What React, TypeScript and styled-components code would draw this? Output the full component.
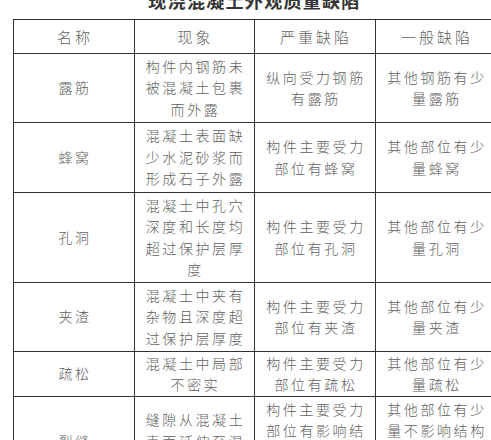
import React from "react";
import styled, { createGlobalStyle } from "styled-components";

const Global = createGlobalStyle`
  html, body { margin: 0; padding: 0; background: #fff; overflow: hidden; }
  body { font-family: "Noto Sans CJK SC", "Noto Sans", sans-serif; }
`;

const Page = styled.div`
  padding-left: 13px;
  width: 483px;
`;

const Title = styled.div`
  margin-top: -14px;
  height: 28px;
  line-height: 28px;
  margin-bottom: 5px;
  text-align: center;
  font-size: 18px;
  font-weight: 700;
  letter-spacing: 1.3px;
  color: #333;
`;

const Table = styled.table`
  width: 483px;
  table-layout: fixed;
  border-collapse: collapse;
`;

const Row = styled.tr<{ $h: number }>`
  height: ${(p) => p.$h}px;
`;

const Cell = styled.td`
  border: 1px solid #333;
  padding: 0 2px 0 4px;
  text-align: center;
  vertical-align: middle;
  font-size: 14px;
  font-weight: 300;
  line-height: 21.5px;
  letter-spacing: 2.6px;
  color: #606060;
  white-space: pre-line;
  overflow: hidden;
`;

const HeadCell = styled(Cell).attrs({ as: "th" })`
  font-weight: 300;
  font-size: 15px;
  letter-spacing: 3px;
`;

type R = { h: number; cells: string[] };

const rows: R[] = [
  { h: 69, cells: ["露筋", "构件内钢筋未\n被混凝土包裹\n而外露", "纵向受力钢筋\n有露筋", "其他钢筋有少\n量露筋"] },
  { h: 70, cells: ["蜂窝", "混凝土表面缺\n少水泥砂浆而\n形成石子外露", "构件主要受力\n部位有蜂窝", "其他部位有少\n量蜂窝"] },
  { h: 90, cells: ["孔洞", "混凝土中孔穴\n深度和长度均\n超过保护层厚\n度", "构件主要受力\n部位有孔洞", "其他部位有少\n量孔洞"] },
  { h: 69, cells: ["夹渣", "混凝土中夹有\n杂物且深度超\n过保护层厚度", "构件主要受力\n部位有夹渣", "其他部位有少\n量夹渣"] },
  { h: 45, cells: ["疏松", "混凝土中局部\n不密实", "构件主要受力\n部位有疏松", "其他部位有少\n量疏松"] },
  { h: 90, cells: ["裂缝", "缝隙从混凝土\n表面延伸至混\n凝土内部", "构件主要受力\n部位有影响结\n构性能或使用\n功能的裂缝", "其他部位有少\n量不影响结构\n性能或使用功\n能的裂缝"] },
];

export default function App() {
  return (
    <>
      <Global />
      <Page>
        <Title>现浇混凝土外观质量缺陷</Title>
        <Table>
          <colgroup>
            <col style={{ width: 121 }} />
            <col style={{ width: 120 }} />
            <col style={{ width: 121 }} />
            <col style={{ width: 121 }} />
          </colgroup>
          <thead>
            <Row $h={34}>
              <HeadCell>名称</HeadCell>
              <HeadCell>现象</HeadCell>
              <HeadCell>严重缺陷</HeadCell>
              <HeadCell>一般缺陷</HeadCell>
            </Row>
          </thead>
          <tbody>
            {rows.map((r) => (
              <Row key={r.cells[0]} $h={r.h}>
                {r.cells.map((c, i) => (
                  <Cell key={i}>{c}</Cell>
                ))}
              </Row>
            ))}
          </tbody>
        </Table>
      </Page>
    </>
  );
}
